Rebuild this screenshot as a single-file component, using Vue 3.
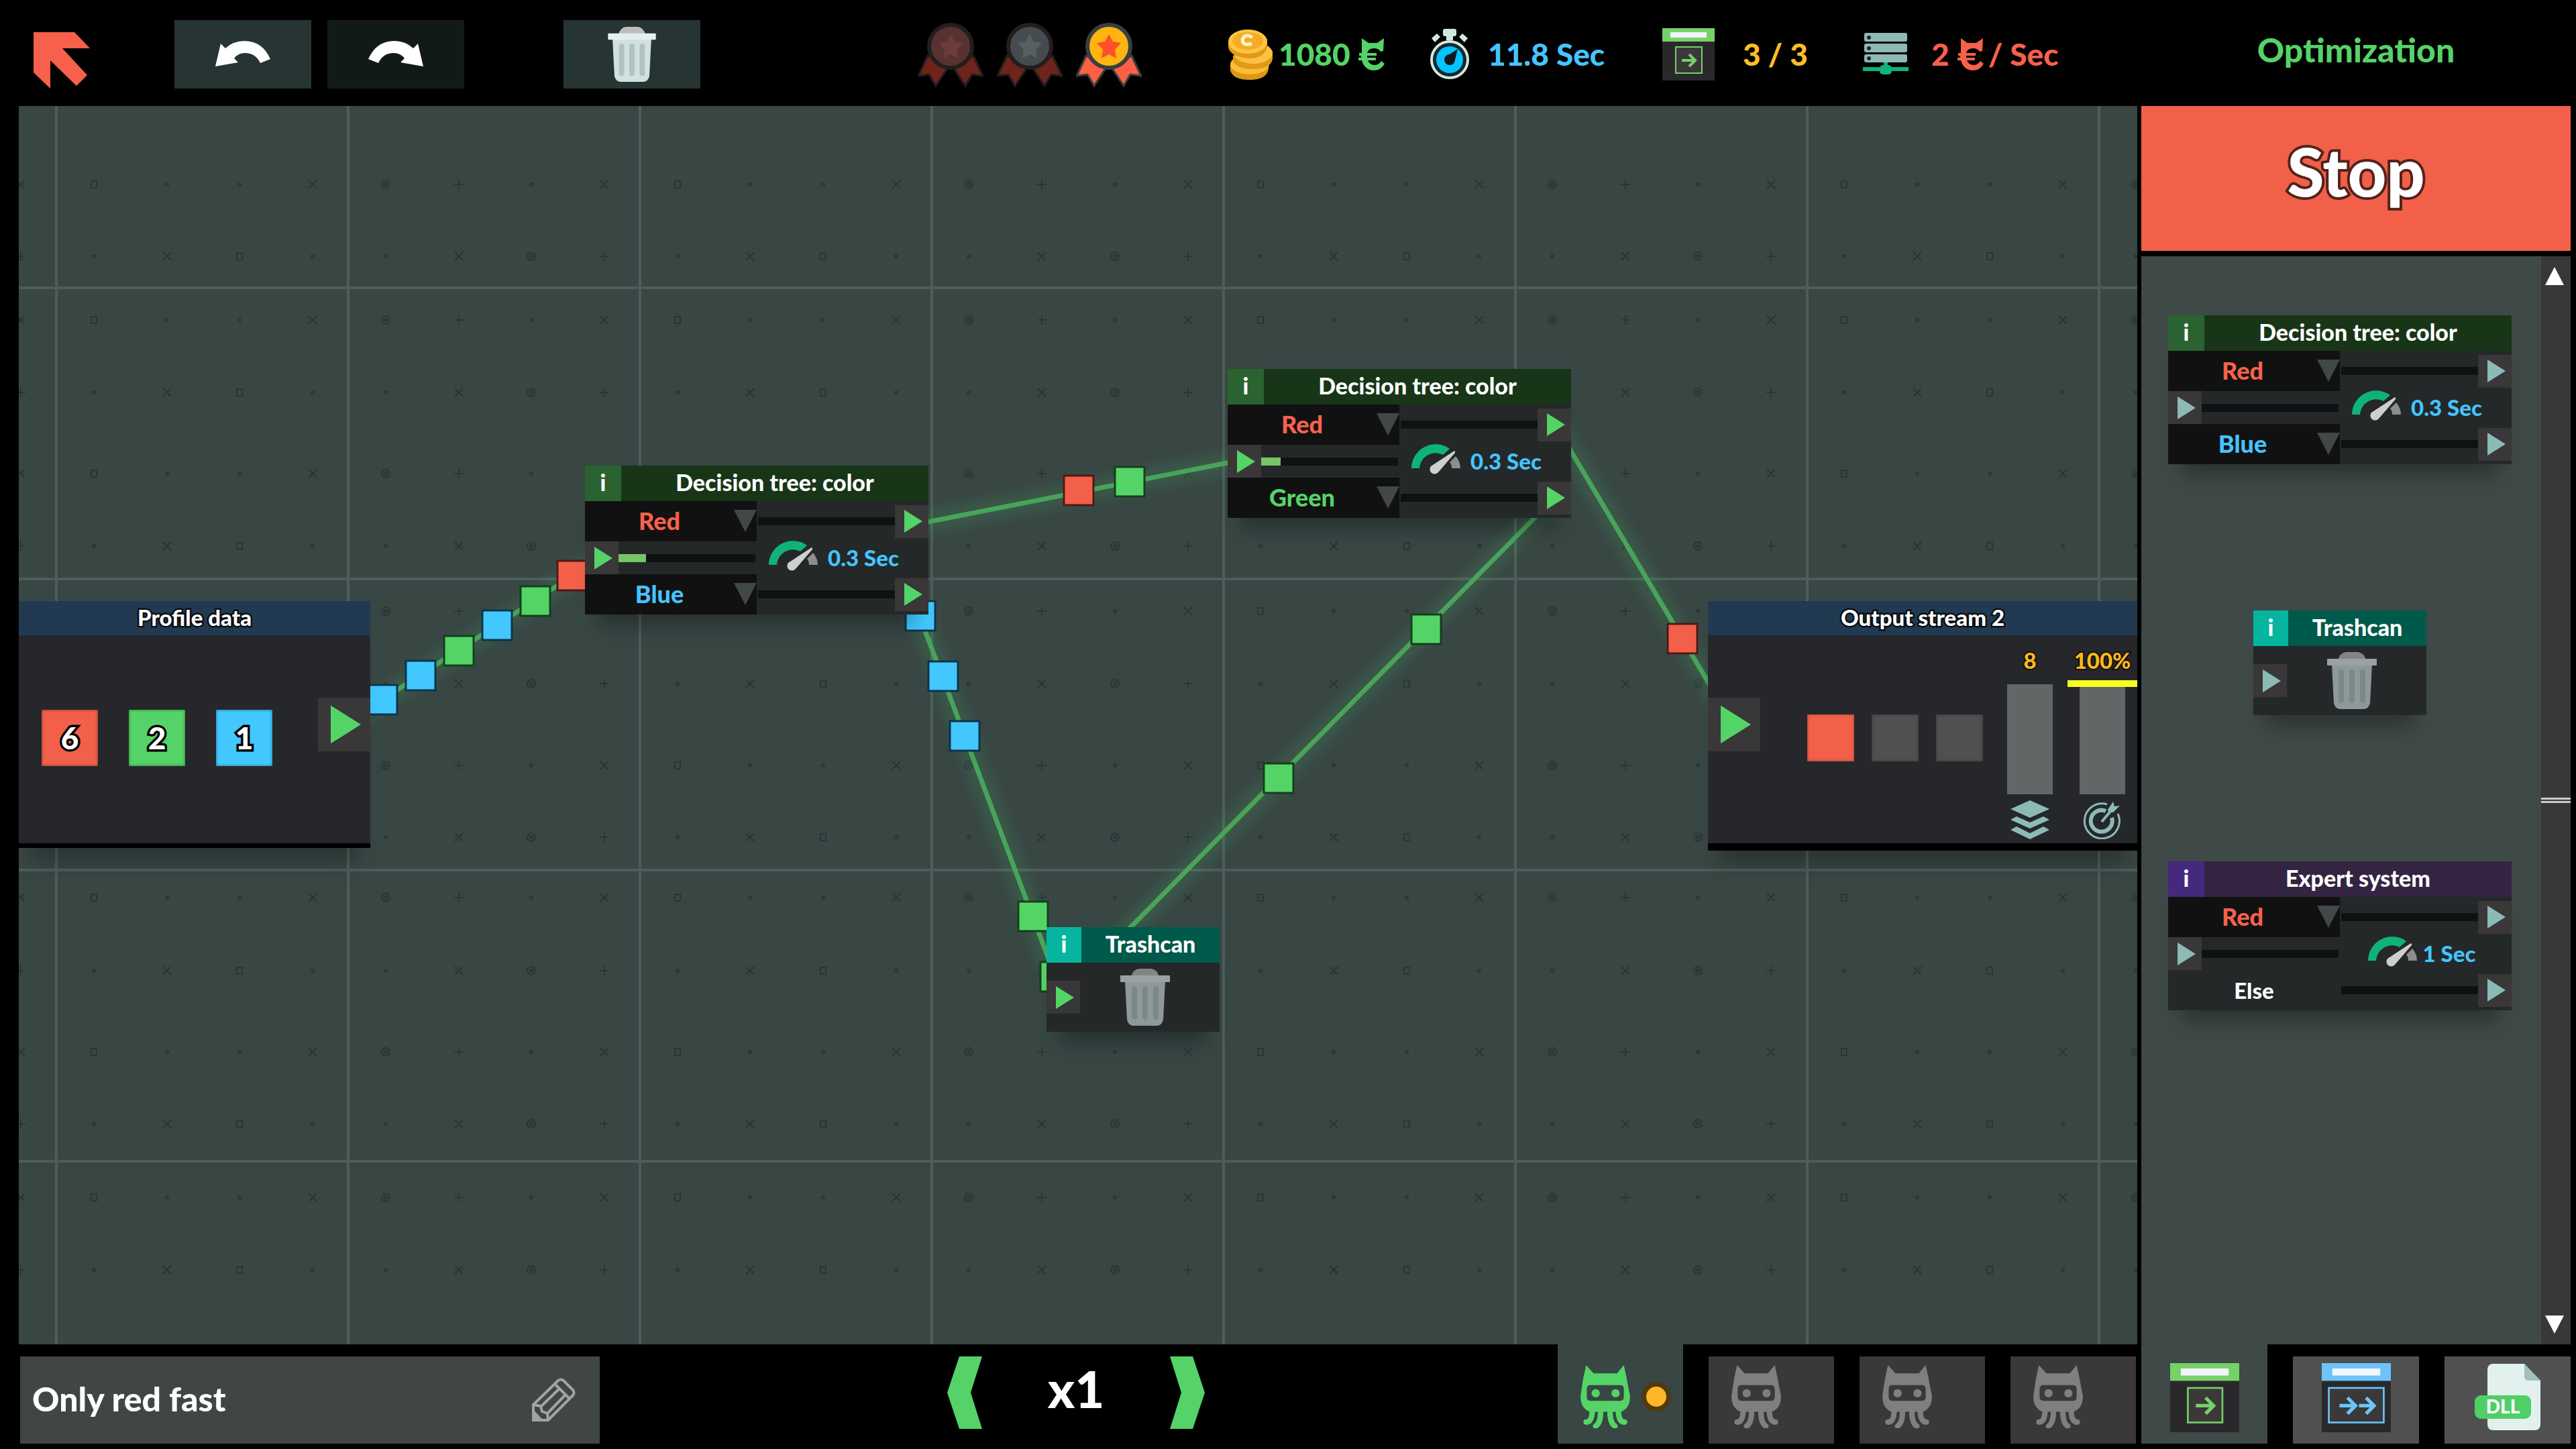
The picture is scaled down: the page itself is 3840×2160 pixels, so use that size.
<template>
    <div class="game">
        <!-- shared icon shapes -->
        <svg class="sprite" aria-hidden="true">
            <symbol id="trash" viewBox="0 0 74 85">
                <path d="M16 12 Q19 1 28 0 H46 Q55 1 58 12 Z" fill="#bfbcbc" />
                <path d="M7 18 H67 L64 76 Q62 85 54 85 H20 Q12 85 10 76 Z" fill="#cfe1e0" />
                <rect y="10" width="74" height="10" rx="1" fill="#e2efee" />
                <path d="M21 30 V72 M37 30 V72 M53 30 V72" stroke="#b3c1c1" stroke-width="8" stroke-linecap="round" />
            </symbol>
            <symbol id="gauge" viewBox="0 0 74 50">
                <path d="M0 36 A36 36 0 0 1 57 7 L47 16 A24 24 0 0 0 12 36 Z" fill="#10b377" />
                <path d="M66 18 Q73 26 73 36 H60 Q60 30 57 27 Z" fill="#8d8d8d" />
                <path d="M61 12 Q66 8 65 13 L40 42 A7 7 0 1 1 29 33 Z" fill="#cfcfcf" />
            </symbol>
            <symbol id="euro" viewBox="0 0 40 48">
                <path d="M5 0 L15 7 H28 L38 0 L37 19 L33 20 Q30 15 23 15 Q15 15 13 22 H27 V26 H13 V29 H26 V33 H14 Q17 40 24 40 Q30 40 34 34 L39 38 Q34 48 22 48 Q9 47 5 33 H0 V29 H4 V26 H1 V22 H5 Z" fill="currentColor" />
            </symbol>
            <symbol id="medal" viewBox="0 0 98 97">
                <path d="M15 50 L1 80 L17 78 L27 95 L46 66 Z M83 50 L97 80 L81 78 L71 95 L52 66 Z" class="ribbon" stroke-width="3" />
                <circle cx="49" cy="36" r="32" fill="currentColor" stroke-width="6" />
                <path d="M49 18 L55 29 L67 31 L58 41 L60 54 L49 48 L38 54 L40 41 L31 31 L43 29 Z" stroke="none" />
            </symbol>
            <symbol id="single" viewBox="0 0 78 78">
                <rect width="78" height="78" fill="#29292c" />
                <rect width="78" height="20" fill="#76d169" />
                <rect x="12" y="6" width="54" height="8" fill="#f2f2fa" />
                <rect x="20" y="28" width="39" height="39" fill="#3a3838" stroke="#76d169" stroke-width="2" />
                <path d="M29 48 H46 M40 39 L49 48 L40 57" fill="none" stroke="#76d169" stroke-width="4" />
            </symbol>
            <symbol id="double" viewBox="0 0 78 78">
                <rect width="78" height="78" fill="#29292c" />
                <rect width="78" height="20" fill="#6cc4fb" />
                <rect x="12" y="6" width="54" height="8" fill="#f2f6fa" />
                <rect x="8" y="28" width="62" height="39" fill="#3a3838" stroke="#6cc4fb" stroke-width="2" />
                <path d="M20 48 H36 M29 39 L38 48 L29 57 M42 48 H57 M50 39 L59 48 L50 57" fill="none" stroke="#6cc4fb" stroke-width="4" />
            </symbol>
            <symbol id="cat" viewBox="0 0 74 92">
                <path d="M9 0 L20 12 H54 L64 0 L68 18 Q70 30 73 44 Q74 62 60 68 H14 Q0 62 1 44 Q3 30 5 18 Z" fill="currentColor" />
                <path d="M18 64 Q18 83 9 83 M30 64 Q31 84 23 89 M44 64 Q43 84 51 89 M56 64 Q56 83 65 83" fill="none" stroke="currentColor" stroke-width="8" stroke-linecap="round" />
                <rect x="10" y="29" width="54" height="23" rx="5" />
                <ellipse cx="23" cy="41" rx="6" ry="6" fill="currentColor" />
                <ellipse cx="52" cy="41" rx="6" ry="6" fill="currentColor" />
            </symbol>
        </svg>

        <header class="toolbar">
            <a href="#" class="logo" aria-label="Menu">
                <svg width="84" height="84" viewBox="0 0 84 84">
                    <path d="M0 0 H61 L84 24 H43 L80 64 L64 80 L25 42 V84 L0 60 Z" fill="#f7614b" />
                </svg>
            </a>
            <button class="tool" aria-label="Undo">
                <svg width="82" height="40" viewBox="0 0 82 40">
                    <path d="M0 38 L8 4 L15 11 Q27 0 43 0 Q70 0 82 27 L67 33 Q60 18 44 18 Q34 18 28 26 L34 32 Z" fill="#fff" />
                </svg>
            </button>
            <button class="tool dim" aria-label="Redo">
                <svg width="82" height="40" viewBox="0 0 82 40">
                    <path d="M82 38 L74 4 L67 11 Q55 0 39 0 Q12 0 0 27 L15 33 Q22 18 38 18 Q48 18 54 26 L48 32 Z" fill="#fff" />
                </svg>
            </button>
            <button class="tool delete" aria-label="Delete">
                <svg width="72" height="82"><use href="#trash" /></svg>
            </button>
            <div class="medals">
                <svg class="medal bronze"><use href="#medal" /></svg>
                <svg class="medal silver"><use href="#medal" /></svg>
                <svg class="medal gold"><use href="#medal" /></svg>
            </div>
            <div class="stats">
                <div class="stat money">
                    <svg width="68" height="76" viewBox="0 0 68 76">
                        <path d="M4 54 V62 Q8 76 33 76 Q58 76 61 60 V50 Z" fill="#dd9718" />
                        <ellipse cx="33" cy="53" rx="29" ry="15" fill="#fcbd33" />
                        <path d="M8 40 V47 Q12 60 38 60 Q64 60 67 45 V33 Z" fill="#e09a1a" />
                        <ellipse cx="38" cy="36" rx="29" ry="16" fill="#fec043" />
                        <path d="M1 19 V28 Q5 42 31 44 Q56 44 59 26 V15 Z" fill="#e09a1a" />
                        <ellipse cx="30" cy="19" rx="29" ry="18" fill="#fec540" />
                        <ellipse cx="30" cy="18" rx="23" ry="13" fill="#f4ab28" />
                        <path d="M37 13 Q26 6 22 16 Q22 26 36 22" fill="none" stroke="#fff3c4" stroke-width="5" />
                    </svg>
                    <span>1080</span>
                    <svg class="coin" width="40" height="48"><use href="#euro" /></svg>
                </div>
                <div class="stat time">
                    <svg width="62" height="76" viewBox="0 0 62 76">
                        <rect x="21" y="0" width="20" height="11" rx="3" fill="#cfe8e2" />
                        <rect x="26" y="9" width="10" height="8" fill="#cfe8e2" />
                        <path d="M4 14 L12 7 L17 12 L9 20 Z M58 14 L50 7 L45 12 L53 20 Z" fill="#cfe8e2" />
                        <circle cx="31" cy="46" r="27" fill="#15262c" stroke="#cfe8e2" stroke-width="4" />
                        <circle cx="31" cy="46" r="20" fill="#00c4ff" />
                        <path d="M43 30 L38 50 A8 8 0 1 1 31 38 Z" fill="#10181c" />
                    </svg>
                    <span>11.8 Sec</span>
                </div>
                <div class="stat modules">
                    <svg width="78" height="78"><use href="#single" /></svg>
                    <span>3 / 3</span>
                </div>
                <div class="stat rate">
                    <svg width="68" height="68" viewBox="0 0 68 68">
                        <rect x="2" y="2" width="64" height="13" rx="3" fill="#8fb9b6" />
                        <rect x="2" y="18" width="64" height="13" rx="3" fill="#8fb9b6" />
                        <rect x="2" y="34" width="64" height="12" rx="3" fill="#8fb9b6" />
                        <path d="M34 46 V54 M0 56 H68" stroke="#10b377" stroke-width="6" />
                        <rect x="25" y="50" width="18" height="14" rx="5" fill="#10b377" />
                        <circle cx="9" cy="9" r="3" fill="#1c2a2c" />
                        <circle cx="9" cy="25" r="3" fill="#1c2a2c" />
                        <circle cx="9" cy="40" r="3" fill="#1c2a2c" />
                    </svg>
                    <span>2</span>
                    <svg class="coin" width="40" height="48"><use href="#euro" /></svg>
                    <span>/ Sec</span>
                </div>
            </div>
        </header>
        <h1 class="level">Optimization</h1>

        <main class="board">
            <svg class="layer">
                <defs>
                    <filter id="glow" x="-50%" y="-50%" width="200%" height="200%"><feGaussianBlur stdDeviation="10" /></filter>
                </defs>
                <g class="grid">
                    <line v-for="n in 9" :key="'v' + n" :x1="n * 435 - 379" :x2="n * 435 - 379" y1="0" y2="100%" />
                    <line v-for="n in 4" :key="'h' + n" x1="0" x2="100%" :y1="n * 434 - 163" :y2="n * 434 - 163" />
                </g>
                <path class="marks" :d="marks" />
                <g v-for="(w, i) in wires" :key="i">
                    <line class="halo" :x1="w[0]" :y1="w[1]" :x2="w[2]" :y2="w[3]" filter="url(#glow)" />
                    <line class="wire" :x1="w[0]" :y1="w[1]" :x2="w[2]" :y2="w[3]" />
                </g>
                <rect v-for="(p, i) in packets" :key="'p' + i" :class="['packet', p[0]]" :x="p[1] - 22" :y="p[2] - 22" width="44" height="44" />
            </svg>

            <section class="stream profile">
                <h2>Profile data</h2>
                <div class="stream-body">
                    <div class="counts">
                        <span class="count red">6</span>
                        <span class="count green">2</span>
                        <span class="count blue">1</span>
                    </div>
                    <span class="port big"><svg width="45" height="58" viewBox="0 0 27 34"><path d="M0 0 L27 17 L0 34 Z" /></svg></span>
                </div>
            </section>

            <section v-for="node in nodes" :key="node.id" class="node tree" :class="node.id">
                <header><button class="info">i</button><h2>Decision tree: color</h2></header>
                <div class="tree-body">
                    <label class="pick" :class="node.top.toLowerCase()">
                        <select v-model="node.top" aria-label="First color"><option v-for="c in colors" :key="c">{{ c }}</option></select>
                        <svg width="34" height="33" viewBox="0 0 34 33"><path d="M0 0 H34 L17 33 Z" /></svg>
                    </label>
                    <div class="out"><i class="track"></i><span class="port"><svg width="27" height="34"><path d="M0 0 L27 17 L0 34 Z" /></svg></span></div>
                    <div class="in"><span class="port"><svg width="27" height="34"><path d="M0 0 L27 17 L0 34 Z" /></svg></span><i class="track"><b :style="{ width: node.load + '%' }"></b></i></div>
                    <div class="speed"><svg width="74" height="50"><use href="#gauge" /></svg>0.3 Sec</div>
                    <label class="pick" :class="node.bottom.toLowerCase()">
                        <select v-model="node.bottom" aria-label="Second color"><option v-for="c in colors" :key="c">{{ c }}</option></select>
                        <svg width="34" height="33" viewBox="0 0 34 33"><path d="M0 0 H34 L17 33 Z" /></svg>
                    </label>
                    <div class="out"><i class="track"></i><span class="port"><svg width="27" height="34"><path d="M0 0 L27 17 L0 34 Z" /></svg></span></div>
                </div>
            </section>

            <section class="node can placed">
                <header><button class="info">i</button><h2>Trashcan</h2></header>
                <div class="can-body">
                    <span class="port"><svg width="27" height="34"><path d="M0 0 L27 17 L0 34 Z" /></svg></span>
                    <svg class="bin" width="74" height="85"><use href="#trash" /></svg>
                </div>
            </section>

            <section class="stream output">
                <h2>Output stream 2</h2>
                <div class="stream-body">
                    <span class="port big"><svg width="45" height="58" viewBox="0 0 27 34"><path d="M0 0 L27 17 L0 34 Z" /></svg></span>
                    <div class="slots"><i class="red"></i><i></i><i></i></div>
                    <div class="meter">
                        <span>8</span>
                        <div class="level-bar"><i></i></div>
                        <svg width="58" height="58" viewBox="0 0 58 58" fill="#8cbab7">
                            <path d="M29 0 L58 13 L29 26 L0 13 Z" />
                            <path d="M0 29 L9 24 L29 33 L49 24 L58 29 L29 42 Z" />
                            <path d="M0 44 L9 39 L29 49 L49 39 L58 44 L29 58 Z" />
                        </svg>
                    </div>
                    <div class="meter full">
                        <span>100%</span>
                        <div class="level-bar"><i></i></div>
                        <svg width="58" height="58" viewBox="0 0 58 58" fill="none" stroke="#8cbab7">
                            <path d="M36 6 A26 26 0 1 0 52 20" stroke-width="3" />
                            <path d="M34 16 A16 16 0 1 0 43 26" stroke-width="6" />
                            <path d="M28 32 L44 13" stroke-width="4" />
                            <path d="M37 14 L45 2 L47 9 L55 8 L45 18 L38 18 Z" fill="#8cbab7" stroke="none" />
                        </svg>
                    </div>
                </div>
            </section>
        </main>

        <aside class="side">
            <button class="stop">Stop</button>
            <div class="panel">
                <div class="palette">
                    <section class="node tree">
                        <header><button class="info">i</button><h2>Decision tree: color</h2></header>
                        <div class="tree-body">
                            <label class="pick red">
                                <select aria-label="First color"><option>Red</option></select>
                                <svg width="34" height="33" viewBox="0 0 34 33"><path d="M0 0 H34 L17 33 Z" /></svg>
                            </label>
                            <div class="out"><i class="track"></i><span class="port"><svg width="27" height="34"><path d="M0 0 L27 17 L0 34 Z" /></svg></span></div>
                            <div class="in"><span class="port"><svg width="27" height="34"><path d="M0 0 L27 17 L0 34 Z" /></svg></span><i class="track"></i></div>
                            <div class="speed"><svg width="74" height="50"><use href="#gauge" /></svg>0.3 Sec</div>
                            <label class="pick blue">
                                <select aria-label="Second color"><option>Blue</option></select>
                                <svg width="34" height="33" viewBox="0 0 34 33"><path d="M0 0 H34 L17 33 Z" /></svg>
                            </label>
                            <div class="out"><i class="track"></i><span class="port"><svg width="27" height="34"><path d="M0 0 L27 17 L0 34 Z" /></svg></span></div>
                        </div>
                    </section>
                    <section class="node can">
                        <header><button class="info">i</button><h2>Trashcan</h2></header>
                        <div class="can-body">
                            <span class="port"><svg width="27" height="34"><path d="M0 0 L27 17 L0 34 Z" /></svg></span>
                            <svg class="bin" width="74" height="85"><use href="#trash" /></svg>
                        </div>
                    </section>
                    <section class="node tree expert">
                        <header><button class="info">i</button><h2>Expert system</h2></header>
                        <div class="tree-body">
                            <label class="pick red">
                                <select aria-label="Color"><option>Red</option></select>
                                <svg width="34" height="33" viewBox="0 0 34 33"><path d="M0 0 H34 L17 33 Z" /></svg>
                            </label>
                            <div class="out"><i class="track"></i><span class="port"><svg width="27" height="34"><path d="M0 0 L27 17 L0 34 Z" /></svg></span></div>
                            <div class="in"><span class="port"><svg width="27" height="34"><path d="M0 0 L27 17 L0 34 Z" /></svg></span><i class="track"></i></div>
                            <div class="speed"><svg width="74" height="50"><use href="#gauge" /></svg>1 Sec</div>
                            <div class="else">Else</div>
                            <div class="out"><i class="track"></i><span class="port"><svg width="27" height="34"><path d="M0 0 L27 17 L0 34 Z" /></svg></span></div>
                        </div>
                    </section>
                </div>
                <div class="scroll">
                    <button aria-label="Scroll up"><svg width="28" height="27"><path d="M14 0 L28 27 H0 Z" fill="#fff" /></svg></button>
                    <i class="thumb"></i>
                    <button aria-label="Scroll down"><svg width="28" height="27"><path d="M0 0 H28 L14 27 Z" fill="#fff" /></svg></button>
                </div>
            </div>
        </aside>

        <footer class="bottom">
            <label class="name">
                <input v-model="schemeName" type="text" aria-label="Scheme name">
                <svg width="66" height="66" viewBox="0 0 66 66" fill="none" stroke="#a3a3a3" stroke-width="4" stroke-linejoin="round">
                    <path d="M3 63 V40 L40 4 Q44 1 48 4 L62 18 Q65 22 62 26 L25 63 Z" />
                    <path d="M3 40 L14 42 L16 50 L24 53 L25 63 M15 42 L42 16 L51 25 L24 53 M35 9 L57 31" />
                    <path d="M3 63 V50 L15 63 Z" fill="#a3a3a3" />
                </svg>
            </label>
            <div class="rateset">
                <button aria-label="Slower"><svg width="52" height="108" viewBox="0 0 52 108"><path d="M18 0 H52 L35 54 L52 108 H18 L0 54 Z" fill="#55d268" /></svg></button>
                <output>x1</output>
                <button aria-label="Faster"><svg width="52" height="108" viewBox="0 0 52 108"><path d="M0 0 H34 L52 54 L34 108 H0 L17 54 Z" fill="#55d268" /></svg></button>
            </div>
            <div class="tabs agents">
                <button class="tab active" aria-label="Agent 1">
                    <svg class="cat" width="76" height="94"><use href="#cat" /></svg>
                    <i class="dot"></i>
                </button>
                <button v-for="n in 3" :key="n" class="tab" :aria-label="'Agent ' + (n + 1)">
                    <svg class="cat" width="76" height="94"><use href="#cat" /></svg>
                </button>
            </div>
        </footer>
        <nav class="tabs kinds">
            <button class="tab active" aria-label="Modules"><svg width="103" height="103"><use href="#single" /></svg></button>
            <button class="tab" aria-label="Fast modules"><svg width="103" height="103"><use href="#double" /></svg></button>
            <button class="tab" aria-label="Libraries">
                <svg width="98" height="100" viewBox="0 0 98 100">
                    <path d="M28 0 H74 L98 25 V90 Q98 99 89 99 H28 Q19 99 19 90 V9 Q19 0 28 0 Z" fill="#e2f1ee" />
                    <path d="M74 0 L98 25 H80 Q74 25 74 18 Z" fill="#9fc0bd" />
                    <rect y="47" width="84" height="35" rx="9" fill="#4fcf66" />
                    <text x="42" y="74" text-anchor="middle">DLL</text>
                </svg>
            </button>
        </nav>
    </div>
</template>

<script setup>
import { ref } from 'vue';

const colors = ['Red', 'Green', 'Blue'];
const schemeName = ref('Only red fast');

const nodes = ref([
    { id: 'first', top: 'Red', bottom: 'Blue', load: 20 },
    { id: 'second', top: 'Red', bottom: 'Green', load: 14 },
]);

// x1, y1, x2, y2 in board space
const wires = [
    [485, 922, 869, 672],
    [1330, 625, 1827, 527],
    [1331, 729, 1556, 1327],
    [2291, 476, 2557, 924],
    [2289, 584, 1556, 1327],
];

const packets = [
    ['blue', 542, 885],
    ['blue', 599, 849],
    ['green', 656, 812],
    ['blue', 713, 774],
    ['green', 770, 738],
    ['red', 825, 700],
    ['red', 1580, 573],
    ['green', 1656, 560],
    ['blue', 1344, 760],
    ['blue', 1378, 850],
    ['blue', 1410, 939],
    ['green', 1512, 1208],
    ['green', 1545, 1298],
    ['red', 2480, 794],
    ['green', 2098, 780],
    ['green', 1878, 1002],
];

// background marks repeat every eight columns
const shapes = {
    s: 'm-4 -5 h8 v10 h-8 z',
    d: 'm-2 0 a2 2 0 1 0 4 0 a2 2 0 1 0 -4 0',
    x: 'm-6 -6 l12 12 m0 -12 l-12 12',
    o: 'm-6 0 a6 6 0 1 0 12 0 a6 6 0 1 0 -12 0 m4 0 a2 2 0 1 0 4 0 a2 2 0 1 0 -4 0',
    p: 'm-7 0 h14 m-7 -7 v14',
};
const rows = [117, 224, 319, 427, 548, 656, 753, 861, 983, 1090, 1180, 1289, 1410, 1517, 1627, 1735];
let marks = '';
rows.forEach((y, r) => {
    const line = r % 2 ? 'dxsddxop' : 'sddxopdx';
    for (let k = -1; k < 29; k++) {
        marks += `M${Math.round(112 + k * 108.7)} ${y} ${shapes[line[(k + 8) % 8]]} `;
    }
});
</script>

<style>
body {
    margin: 0;
    background: #000;
}
</style>

<style scoped>
.game {
    display: grid;
    grid-template-columns: minmax(0, 1fr) 640px;
    grid-template-rows: 158px minmax(0, 1fr) 156px;
    column-gap: 6px;
    height: 100vh;
    padding: 0 8px 0 28px;
    box-sizing: border-box;
    background: #000;
    color: #fff;
    font-family: Lato, "Open Sans", sans-serif;
    font-weight: 900;
    overflow: hidden;
}

.sprite {
    position: absolute;
    width: 0;
    height: 0;
}

svg {
    display: block;
    flex: none;
}

button {
    border: 0;
    padding: 0;
    background: none;
    color: inherit;
    font: inherit;
    cursor: pointer;
}

h1,
h2 {
    margin: 0;
    font: inherit;
}

/* top bar */
.toolbar {
    display: flex;
    align-items: center;
    padding: 4px 0 0 22px;
}

.logo {
    margin: 18px 126px 0 0;
}

.tool {
    display: flex;
    align-items: center;
    justify-content: center;
    width: 204px;
    height: 102px;
    margin-right: 24px;
    background: #263533;
}

.tool.dim {
    background: #121a19;
}

.tool.delete {
    margin: 0 324px 0 124px;
}

.medals {
    display: flex;
    gap: 20px;
    margin-right: 128px;
}

.medal {
    width: 98px;
    height: 97px;
}

.ribbon {
    fill: var(--ribbon);
}

.bronze {
    --ribbon: #70231a;
    color: #573231;
    fill: #6b3c3b;
    stroke: #221e1e;
}

.silver {
    --ribbon: #70231a;
    color: #454b4e;
    fill: #566163;
    stroke: #221e1e;
}

.gold {
    --ribbon: #ff5f45;
    color: #ffb510;
    fill: #ff4f2b;
    stroke: #3a3d42;
}

.stats {
    display: grid;
    grid-template-columns: 300px 348px 299px auto;
    font-size: 46px;
    white-space: nowrap;
}

.stat {
    display: flex;
    align-items: center;
}

.stat span {
    padding-bottom: 2px;
}

.money {
    gap: 8px;
    color: #55d268;
}

.money .coin {
    margin-left: 4px;
}

.time {
    gap: 26px;
    color: #45c4ff;
}

.modules {
    gap: 42px;
    color: #ffbf24;
}

.rate {
    gap: 6px;
    color: #f7614b;
}

.rate .coin {
    margin-left: 6px;
}

.rate span:first-of-type {
    margin-left: 28px;
}

.level {
    display: flex;
    align-items: center;
    justify-content: center;
    padding-bottom: 10px;
    color: #55d268;
    font-size: 50px;
}

/* board */
.board {
    position: relative;
    overflow: hidden;
    background: #384644;
}

.layer {
    position: absolute;
    inset: 0;
    width: 100%;
    height: 100%;
}

.grid line {
    stroke: #4c5d5a;
    stroke-width: 4;
}

.marks {
    fill: none;
    stroke: #293634;
    stroke-width: 2;
}

.wire {
    stroke: #48a45b;
    stroke-width: 7;
}

.halo {
    stroke: #4cc564;
    stroke-width: 30;
    opacity: .16;
}

.packet {
    stroke-width: 3;
}

.packet.red {
    fill: #f2604a;
    stroke: #4d1a14;
}

.packet.green {
    fill: #54d467;
    stroke: #143f1c;
}

.packet.blue {
    fill: #42c8ff;
    stroke: #0d344a;
}

.stream,
.first,
.second,
.placed {
    position: absolute;
}

.stream {
    top: 738px;
    background: #26272a;
    box-shadow: 0 40px 30px -20px rgba(0, 0, 0, .25);
}

.profile {
    left: 0;
    width: 524px;
    border-bottom: 7px solid #000;
}

.output {
    left: 2518px;
    width: 640px;
    border-bottom: 11px solid #000;
}

.first {
    left: 844px;
    top: 536px;
}

.second {
    left: 1802px;
    top: 392px;
}

.placed {
    left: 1532px;
    top: 1224px;
}

.stream h2 {
    padding-bottom: 3px;
    background: #213a52;
    font-size: 33px;
    line-height: 48px;
    text-align: center;
    -webkit-text-stroke: 5px #0b0f14;
    paint-order: stroke fill;
}

.stream-body {
    display: flex;
    align-items: center;
    height: 310px;
}

.counts {
    display: flex;
    flex: 1;
    gap: 46px;
    padding: 0 0 4px 34px;
}

.count {
    width: 84px;
    border-radius: 1px;
    font-size: 46px;
    line-height: 84px;
    text-align: center;
    -webkit-text-stroke: 7px #000;
    paint-order: stroke fill;
    box-shadow: inset 0 0 4px rgba(0, 0, 0, .5);
}

.count.red,
.slots .red {
    background: #f2604a;
}

.count.green {
    background: #54d467;
}

.count.blue {
    background: #42c8ff;
}

.port {
    display: flex;
    flex: none;
    align-items: center;
    justify-content: center;
    width: 50px;
    height: 49px;
    padding-left: 4px;
    box-sizing: border-box;
    background: #393737;
    fill: #8cbab7;
}

.board .port {
    fill: #54d467;
}

.port.big {
    width: 78px;
    height: 80px;
    margin-bottom: 44px;
}

.slots {
    display: flex;
    flex: 1;
    gap: 26px;
    padding: 0 0 4px 70px;
}

.slots i {
    width: 70px;
    height: 70px;
    background: #505050;
    box-shadow: inset 0 0 4px rgba(0, 0, 0, .4);
}

.meter {
    display: flex;
    flex-direction: column;
    align-items: center;
    width: 104px;
    margin-left: 4px;
    padding-top: 6px;
    color: #ffb81c;
    font-size: 33px;
    line-height: 48px;
}

.meter span {
    -webkit-text-stroke: 4px #111;
    paint-order: stroke fill;
}

.level-bar {
    display: flex;
    justify-content: center;
    width: 100%;
    height: 164px;
    margin: 6px 0 9px;
    border-top: 6px solid transparent;
}

.level-bar i {
    width: 68px;
    background: #616667;
}

.full .level-bar {
    height: 160px;
    border-top: 10px solid #f7ff1f;
}

/* processors */
.node {
    background: #242828;
    box-shadow: 0 36px 28px -20px rgba(0, 0, 0, .3);
}

.node header {
    display: flex;
    height: 53px;
    background: #183518;
    font-size: 34px;
    line-height: 50px;
    text-align: center;
}

.node h2 {
    flex: 1;
}

.info {
    width: 54px;
    padding-bottom: 3px;
    background: #2a6330;
}

.can header {
    background: #005a4b;
}

.can .info {
    width: 52px;
    background: #06b5a0;
}

.expert header {
    background: #342442;
}

.expert .info {
    background: #46287d;
}

.tree {
    width: 512px;
}

.tree-body {
    display: grid;
    grid-template-columns: 1fr 1fr;
    grid-template-rows: 60px 49px 60px;
}

.pick {
    position: relative;
    display: flex;
    background: #111;
    font-size: 36px;
}

.pick.red {
    color: #f7614b;
}

.pick.blue {
    color: #45c4ff;
}

.pick.green {
    color: #54d467;
}

.pick select {
    width: 100%;
    padding: 0 34px 2px 0;
    border: 0;
    appearance: none;
    background: none;
    color: inherit;
    font: inherit;
    text-align: center;
    text-align-last: center;
}

.pick svg {
    position: absolute;
    right: 0;
    top: 13px;
    fill: #424747;
    pointer-events: none;
}

.in,
.out {
    display: flex;
    align-items: center;
}

.out {
    padding-left: 2px;
}

.in {
    padding-right: 2px;
}

.track {
    display: flex;
    flex: 1;
    height: 12px;
    background: #0d1213;
}

.track b {
    background: #77c566;
}

.speed {
    display: flex;
    align-items: center;
    justify-content: center;
    gap: 14px;
    padding: 0 26px 2px 0;
    color: #45c4ff;
    font-size: 33px;
}

.expert .speed {
    gap: 8px;
    padding-right: 12px;
}

.else {
    font-size: 33px;
    line-height: 60px;
    text-align: center;
}

.can {
    width: 258px;
}

.can-body {
    display: flex;
    align-items: center;
    height: 103px;
}

.bin {
    margin-left: 60px;
    opacity: .62;
}

/* right column */
.side {
    display: flex;
    flex-direction: column;
    gap: 8px;
}

.stop {
    height: 216px;
    padding-bottom: 24px;
    background: #f2604a;
    font-size: 100px;
    -webkit-text-stroke: 8px #54231b;
    paint-order: stroke fill;
}

.panel {
    display: flex;
    flex: 1;
    background: #3f4947;
}

.palette {
    display: flex;
    flex: 1;
    flex-direction: column;
    align-items: center;
    gap: 218px;
    padding: 88px 4px 0 0;
}

.scroll {
    display: flex;
    flex-direction: column;
    align-items: center;
    justify-content: space-between;
    width: 44px;
    padding: 16px 4px 16px 0;
    box-sizing: border-box;
    background: #393737;
}

.thumb {
    align-self: flex-start;
    width: 44px;
    height: 2px;
    border-top: 3px solid #cbcbcb;
    border-bottom: 3px solid #cbcbcb;
}

/* bottom bar */
.bottom {
    display: flex;
    align-items: flex-start;
    padding: 0 2px;
}

.name {
    display: flex;
    align-items: center;
    width: 864px;
    height: 130px;
    margin-top: 18px;
    padding: 0 36px 0 18px;
    box-sizing: border-box;
    background: #404645;
}

.name input {
    flex: 1;
    min-width: 0;
    padding: 0 0 4px;
    border: 0;
    background: none;
    color: #fff;
    font: inherit;
    font-size: 50px;
}

.rateset {
    display: flex;
    align-items: center;
    justify-content: space-between;
    width: 384px;
    margin: 18px 0 0 518px;
}

.rateset output {
    padding-bottom: 12px;
    font-size: 76px;
    line-height: 96px;
}

.tabs {
    display: flex;
    align-items: flex-start;
    gap: 38px;
}

.agents {
    margin-left: auto;
}

.tab {
    display: flex;
    align-items: center;
    justify-content: center;
    width: 188px;
    height: 130px;
    margin-top: 18px;
    padding-bottom: 8px;
    background: #505050;
}

.agents .tab {
    justify-content: flex-start;
    width: 187px;
    padding: 0 0 10px 33px;
    background: #3a3838;
    color: #7f7f7f;
}

.cat {
    fill: #3a3838;
}

.tab.active {
    height: 148px;
    margin-top: 0;
    padding: 10px 0 0;
    background: #3f4947;
}

.agents .tab.active {
    padding: 18px 0 10px 33px;
    background: #384644;
    color: #54d467;
}

.active .cat {
    fill: #384644;
}

.dot {
    width: 30px;
    height: 30px;
    margin-left: 16px;
    border: 7px solid #53390c;
    border-radius: 50%;
    background: #ffb729;
}

.kinds text {
    fill: #fff;
    font-size: 28px;
}
</style>
